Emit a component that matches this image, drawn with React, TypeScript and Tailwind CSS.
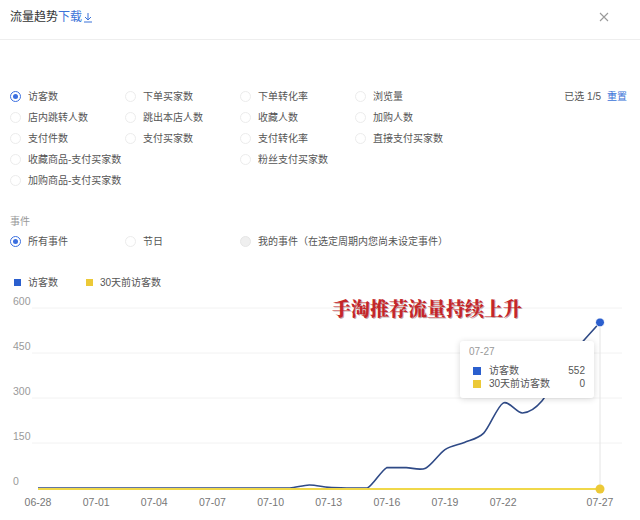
import React from "react";

const FONT = '"Liberation Sans", "Noto Sans CJK SC", sans-serif';

type Item = { label: string; state?: "on" | "off" | "disabled" } | null;

function Radio({ state = "off" }: { state?: "on" | "off" | "disabled" }) {
  if (state === "on")
    return (
      <span className="flex h-[11px] w-[11px] shrink-0 items-center justify-center rounded-full border border-[#3b6fe0] bg-white">
        <span className="h-[5px] w-[5px] rounded-full bg-[#3b6fe0]" />
      </span>
    );
  if (state === "disabled")
    return <span className="h-[11px] w-[11px] shrink-0 rounded-full border border-[#e6e6e6] bg-[#efefef]" />;
  return <span className="h-[11px] w-[11px] shrink-0 rounded-full border border-[#ececec] bg-white" />;
}

function Cell({ item }: { item: Item }) {
  if (!item) return <div className="h-[21px]" />;
  return (
    <div className="flex h-[21px] items-center gap-[7px] whitespace-nowrap">
      <Radio state={item.state} />
      <span className="text-[10px] leading-[14px] text-[#555]">{item.label}</span>
    </div>
  );
}

const rows: Item[][] = [
  [{ label: "访客数", state: "on" }, { label: "下单买家数" }, { label: "下单转化率" }, { label: "浏览量" }],
  [{ label: "店内跳转人数" }, { label: "跳出本店人数" }, { label: "收藏人数" }, { label: "加购人数" }],
  [{ label: "支付件数" }, { label: "支付买家数" }, { label: "支付转化率" }, { label: "直接支付买家数" }],
  [{ label: "收藏商品-支付买家数" }, null, { label: "粉丝支付买家数" }, null],
  [{ label: "加购商品-支付买家数" }, null, null, null],
];

const values = [0, 0, 0, 0, 0, 0, 0, 0, 0, 0, 0, 0, 0, 0, 10, 2, 0, 0, 68, 68, 66, 128, 152, 183, 283, 250, 290, 400, 480, 552];
const X0 = 38;
const DX = 19.38;
const px = (i: number) => X0 + i * DX;
const py = (v: number) => 198 - v * 0.3;

function smoothPath(vals: number[]) {
  const pts = vals.map((v, i) => [px(i), py(v)]);
  let d = `M${pts[0][0]},${pts[0][1]}`;
  const k = 0.9;
  for (let i = 0; i < pts.length - 1; i++) {
    const p0 = pts[Math.max(0, i - 1)];
    const p1 = pts[i];
    const p2 = pts[i + 1];
    const p3 = pts[Math.min(pts.length - 1, i + 2)];
    const c1x = p1[0] + ((p2[0] - p0[0]) / 6) * k;
    let c1y = p1[1] + ((p2[1] - p0[1]) / 6) * k;
    const c2x = p2[0] - ((p3[0] - p1[0]) / 6) * k;
    let c2y = p2[1] - ((p3[1] - p1[1]) / 6) * k;
    if (p1[1] === p2[1]) {
      c1y = p1[1];
      c2y = p2[1];
    }
    d += ` C${c1x.toFixed(1)},${c1y.toFixed(1)} ${c2x.toFixed(1)},${c2y.toFixed(1)} ${p2[0].toFixed(1)},${p2[1].toFixed(1)}`;
  }
  return d;
}

const xLabels: [string, number][] = [
  ["06-28", 0],
  ["07-01", 3],
  ["07-04", 6],
  ["07-07", 9],
  ["07-10", 12],
  ["07-13", 15],
  ["07-16", 18],
  ["07-19", 21],
  ["07-22", 24],
  ["07-27", 29],
];

const yLabels: [string, number][] = [
  ["600", 12],
  ["450", 57],
  ["300", 102],
  ["150", 147],
  ["0", 192],
];

export default function App() {
  return (
    <div className="relative h-[520px] w-[640px] overflow-hidden bg-white" style={{ fontFamily: FONT }}>
      {/* Header */}
      <div className="flex h-[40px] items-start justify-between border-b border-[#eeeeee] pl-[10px] pr-[31px] pt-[9px]">
        <div className="flex items-center text-[12px] leading-[16px]">
          <span className="text-[#333]">流量趋势</span>
          <span className="text-[#3b73d8]">下载</span>
          <svg width="10" height="11" viewBox="0 0 10 11" className="ml-[1px]">
            <path d="M5 1 V8 M2 5 L5 8 L8 5 M1 10 H9" stroke="#3b73d8" strokeWidth="1" fill="none" />
          </svg>
        </div>
        <svg width="10" height="10" viewBox="0 0 10 10" className="mt-[3px]">
          <path d="M1 1 L9 9 M9 1 L1 9" stroke="#9a9a9a" strokeWidth="1.1" />
        </svg>
      </div>

      {/* Metric radios */}
      <div className="mt-[46px] grid grid-cols-[115px_115px_115px_115px_1fr] pl-[10px] pr-[13px]">
        {rows.map((r, ri) => (
          <React.Fragment key={ri}>
            {r.map((it, ci) => (
              <Cell key={ci} item={it} />
            ))}
            {ri === 0 ? (
              <div className="flex h-[21px] items-center justify-end gap-[6px] whitespace-nowrap text-[10px]">
                <span className="text-[#555]">已选 1/5</span>
                <span className="text-[#3b73d8]">重置</span>
              </div>
            ) : (
              <div />
            )}
          </React.Fragment>
        ))}
      </div>

      {/* Events */}
      <div className="mt-[23px] pl-[10px] text-[10px] leading-[16px] text-[#999]">事件</div>
      <div className="mt-[1px] grid grid-cols-[115px_115px_1fr] pl-[10px]">
        <Cell item={{ label: "所有事件", state: "on" }} />
        <Cell item={{ label: "节日" }} />
        <Cell item={{ label: "我的事件（在选定周期内您尚未设定事件）", state: "disabled" }} />
      </div>

      {/* Legend */}
      <div className="mt-[22px] flex h-[16px] items-center pl-[14px] text-[10px] text-[#555]">
        <span className="h-[7px] w-[7px] bg-[#2b5fce]" />
        <span className="ml-[7px]">访客数</span>
        <span className="ml-[28px] h-[7px] w-[7px] bg-[#ecc937]" />
        <span className="ml-[7px]">30天前访客数</span>
      </div>

      {/* Chart */}
      <div className="relative h-[230px]">
        <svg width="640" height="230" viewBox="0 0 640 230" className="block">
          {[18, 63, 108, 153].map((y) => (
            <line key={y} x1="32" x2="622" y1={y} y2={y} stroke="#f2f2f2" strokeWidth="1" />
          ))}
          {yLabels.map(([t, y]) => (
            <text key={t} x="13" y={y} dominantBaseline="middle" fontSize="10.5" fill="#9a9a9a" fontFamily={FONT}>
              {t}
            </text>
          ))}
          {xLabels.map(([t, i]) => (
            <text key={t} x={px(i)} y="213" dominantBaseline="middle" textAnchor="middle" fontSize="10.5" fill="#777" fontFamily={FONT}>
              {t}
            </text>
          ))}
          <line x1="600" x2="600" y1="32" y2="198" stroke="#e4e4e4" strokeWidth="1" />
          <path d={smoothPath(values)} stroke="#2f4a86" strokeWidth="1.6" fill="none" />
          <line x1={px(0)} x2="600" y1="199" y2="199" stroke="#f0d84a" strokeWidth="2" />
          <circle cx="600" cy={py(552)} r="4.5" fill="#2b5fce" stroke="#ffffff" strokeWidth="1" />
          <circle cx="600" cy="199" r="4.5" fill="#ecc937" />
        </svg>

        {/* Red annotation */}
        <div
          className="absolute left-[332px] top-[7px] whitespace-nowrap text-[19px] font-black leading-[22px] text-[#c4262a]"
          style={{ fontFamily: '"Noto Serif CJK SC", "Noto Sans CJK SC", serif', textShadow: "1px 1px 0 rgba(90,0,0,0.35)" }}
        >
          手淘推荐流量持续上升
        </div>

        {/* Tooltip */}
        <div className="absolute left-[460px] top-[51px] h-[57px] w-[134px] rounded-[3px] bg-white px-[9px] pt-[4px] text-[10px] shadow-[0_1px_6px_rgba(0,0,0,0.16)]">
          <div className="leading-[14px] text-[#999]">07-27</div>
          <div className="mt-[5px] flex h-[13px] items-center">
            <span className="ml-[4px] h-[8px] w-[8px] bg-[#2b5fce]" />
            <span className="ml-[8px] text-[#555]">访客数</span>
            <span className="ml-auto text-[#555]">552</span>
          </div>
          <div className="flex h-[13px] items-center">
            <span className="ml-[4px] h-[8px] w-[8px] bg-[#ecc937]" />
            <span className="ml-[8px] text-[#555]">30天前访客数</span>
            <span className="ml-auto text-[#555]">0</span>
          </div>
        </div>
      </div>
    </div>
  );
}
